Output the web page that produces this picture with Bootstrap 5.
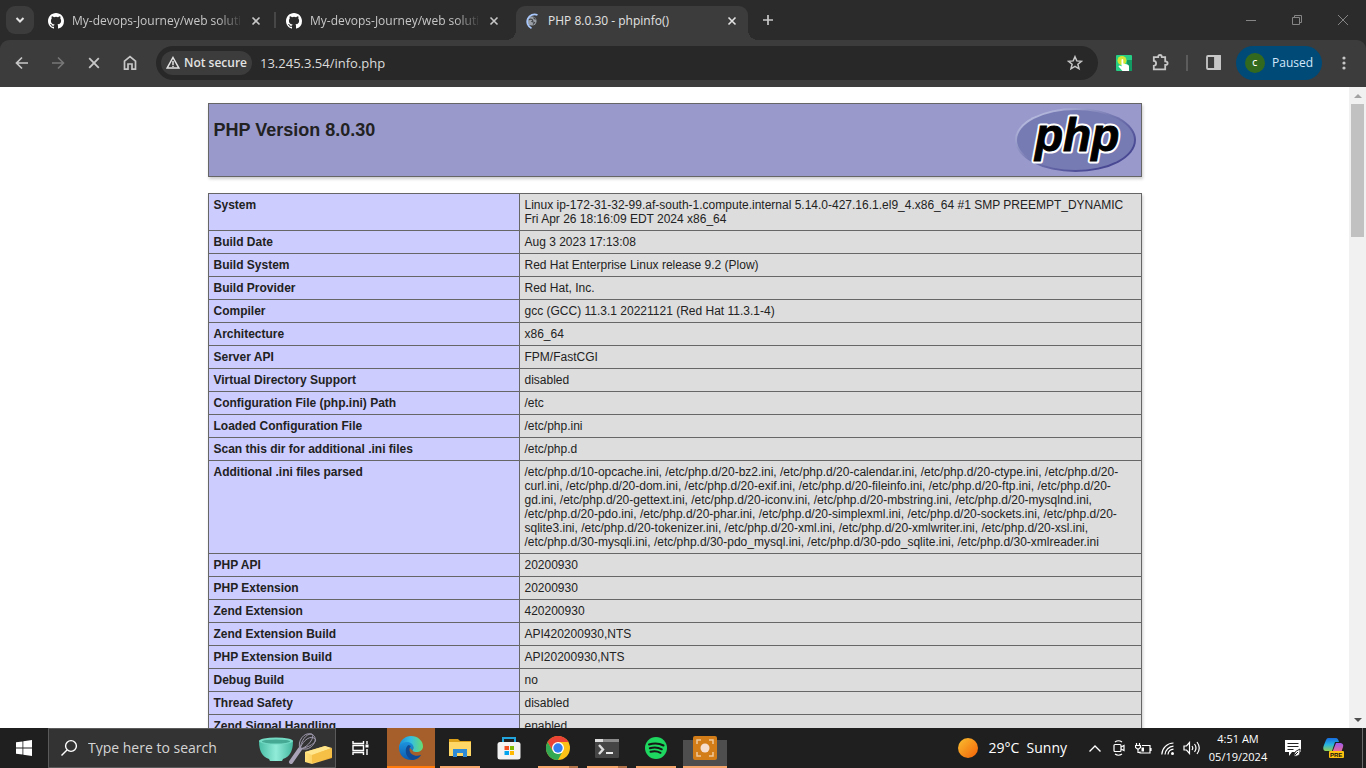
<!DOCTYPE html>
<html lang="en">
<head>
<meta charset="utf-8">
<meta name="viewport" content="width=device-width, initial-scale=1">
<title>PHP 8.0.30 - phpinfo()</title>
<link href="https://cdn.jsdelivr.net/npm/bootstrap@5.3.0/dist/css/bootstrap.min.css" rel="stylesheet">
<style>
  body { font-family: "Open Sans", "Noto Sans", sans-serif; font-size: 12px; line-height: 16px; background: #fff; }
  button { font: inherit; color: inherit; border: 0; background: transparent; padding: 0; }
  svg { display: block; flex: none; }
  .ln { fill: none; stroke: currentColor; }

  /* tab strip */
  .tabstrip { background: #2b2b2b; color: #c7c7c7; height: 40px; }
  .tab-search { width: 28px; height: 28px; border-radius: 9px; background: #3c3c3c; color: #e3e3e3; margin: 0 6px; }
  .browser-tab { width: 238px; height: 34px; padding: 0 8px 4px; margin-top: 6px; position: relative; }
  .browser-tab.split::after { content: ""; position: absolute; right: 2px; top: 6px; width: 2px; height: 16px; background: #474747; }
  .browser-tab.current { width: 232px; background: #3c3c3c; color: #e3e3e3; border-radius: 9px 9px 0 0; }
  .browser-tab.current::before, .browser-tab.current::after { content: ""; position: absolute; bottom: 0; width: 10px; height: 10px; }
  .browser-tab.current::before { left: -10px; background: radial-gradient(circle at 0 0, transparent 10px, #3c3c3c 10px); }
  .browser-tab.current::after { right: -10px; background: radial-gradient(circle at 100% 0, transparent 10px, #3c3c3c 10px); }
  .tab-title { width: 168px; height: 18px; overflow: hidden; white-space: nowrap; line-height: 18px; text-align: left; }
  .fade-end { -webkit-mask-image: linear-gradient(90deg, #000 145px, transparent 172px); mask-image: linear-gradient(90deg, #000 145px, transparent 172px); }
  .new-tab { width: 40px; height: 34px; }
  .win-btn { width: 46px; height: 40px; color: #858585; }

  /* toolbar */
  .toolbar { background: #3c3c3c; color: #c7c7c7; height: 47px; padding: 0 4px 2px; border-radius: 9px 9px 0 0; }
  .toolbar-wrap { background: #2b2b2b; }
  .tool { width: 36px; height: 34px; }
  .dimmed { color: #777; }
  .omnibox { background: #282828; border-radius: 17px; height: 34px; margin: 0 8px; padding: 0 5px; }
  .chip { background: #3c3c3c; color: #e3e3e3; border-radius: 12px; height: 24px; width: 91px; font-weight: 600; }
  .address { border: 0; outline: 0; background: transparent; color: #dcdcdc; font-size: 13px; min-width: 0; padding: 0 8px; height: 26px; }
  .profile { background: #004a77; color: #d3e8fb; border-radius: 17px; width: 86px; height: 34px; margin: 0 4px 0 5px; }
  .avatar { width: 20px; height: 20px; border-radius: 50%; background: #33691e; color: #fff; font-size: 8px; font-weight: 600; line-height: 20px; }
  .divider { width: 17px; height: 16px; }
  .divider span { width: 2px; height: 16px; background: #5c5c5c; }

  /* document */
  .doc { font-family: "Liberation Sans", Arial, sans-serif; color: #222; padding: 16px 0; }
  .info { width: 934px; border-collapse: collapse; box-shadow: 1px 2px 3px #ccc; margin: 0 auto 16px; font-size: 12px; line-height: 14px; }
  .info th, .info td { border: 1px solid #666; padding: 4px 5px; vertical-align: top; text-align: left; }
  .info th { background: #ccf; width: 311px; font-weight: bold; }
  .info td { background: #ddd; overflow-wrap: break-word; }
  .masthead { width: 934px; height: 74px; background: #99c; border: 1px solid #666; box-shadow: 1px 2px 3px #ccc; margin: 0 auto 16px; padding: 4px 5px; }
  .masthead h1 { font-size: 18px; line-height: 20px; font-weight: bold; margin: 12px 0 0; }
  .sbar { width: 17px; background: #f1f1f1; }
  .sbar-thumb { width: 13px; height: 133px; background: #c1c1c1; }
  .sbar-btn { height: 17px; width: 17px; }

  /* taskbar */
  .taskbar { background: #1f1f1f; color: #fff; height: 40px; }
  .task { width: 48px; height: 40px; position: relative; }
  .task-search { width: 288px; height: 40px; background: #333; border: 1px solid #5a5a5a; padding: 0 3px 0 11px; }
  .task-search input { background: transparent; border: 0; outline: 0; min-width: 0; font-size: 14px; padding: 0 0 0 10px; color: #ddd; }
  .task-search input::placeholder { color: #d5d5d5; opacity: 1; }
  .apps { column-gap: 1px; padding-left: 3px; }
  .running::after { content: ""; position: absolute; left: 4px; right: 4px; bottom: 0; height: 2px; background: #f6a56b; }
  .stacked::after { background: linear-gradient(90deg, #f6a56b 31px, #b5754a 31px); }
  .active-app { background: #a65e2a; }
  .active-app::after { left: 0; right: 0; background: #ff7a0a; }
  .pressed::before { content: ""; position: absolute; left: 2px; right: 2px; bottom: 0; height: 28px; background: #4e4e4e; }
  .pressed::after { left: 2px; right: 2px; }
  .pressed svg { position: relative; }
  .tray { width: 24px; height: 40px; }
  .weather { font-size: 14px; gap: 10px; }
  .clock { width: 70px; font-size: 11px; line-height: 18px; }
  .alerts { width: 40px; height: 40px; }
  .show-desktop { width: 4px; height: 40px; border-left: 1px solid #6b6b6b; margin-left: 9px; }
</style>
</head>
<body>
<div class="vh-100 d-flex flex-column overflow-hidden">

  <header class="flex-shrink-0">
    <div class="tabstrip d-flex align-items-center">
      <button class="tab-search d-flex align-items-center justify-content-center flex-shrink-0" aria-label="Search tabs">
        <svg width="10" height="8" viewBox="0 0 10 8" class="ln" stroke-width="2"><path d="M1.500 2 5 5.500 8.500 2"/></svg>
      </button>
      <div class="browser-tab split d-flex align-items-center gap-2 flex-shrink-0">
        <svg width="16" height="16" viewBox="0 0 16 16" fill="#fff"><path id="octo" d="M8 0C3.58 0 0 3.58 0 8c0 3.54 2.290 6.530 5.470 7.590.4.07.55-.17.55-.38 0-.19-.01-.82-.01-1.490-2.010.37-2.530-.49-2.690-.94-.09-.23-.48-.94-.82-1.130-.28-.15-.68-.52-.01-.53.63-.01 1.080.58 1.230.82.72 1.210 1.870.87 2.330.66.07-.52.28-.87.51-1.070-1.780-.2-3.640-.89-3.640-3.950 0-.87.31-1.590.82-2.150-.08-.2-.36-1.020.08-2.120 0 0 .67-.21 2.200.82a7.600 7.600 0 0 1 4 0c1.530-1.040 2.200-.82 2.200-.82.44 1.100.16 1.920.08 2.120.51.56.82 1.270.82 2.150 0 3.070-1.870 3.750-3.650 3.950.29.25.54.73.54 1.480 0 1.070-.01 1.930-.01 2.200 0 .21.15.46.55.38A8 8 0 0 0 16 8c0-4.420-3.580-8-8-8z"/></svg>
        <span class="tab-title fade-end">My-devops-Journey/web soluti</span>
        <button aria-label="Close tab"><svg width="16" height="16" viewBox="0 0 16 16" class="ln" stroke-width="1.600"><path d="m4.500 4.500 7 7M11.500 4.500l-7 7"/></svg></button>
      </div>
      <div class="browser-tab d-flex align-items-center gap-2 flex-shrink-0">
        <svg width="16" height="16" viewBox="0 0 16 16" fill="#fff"><use href="#octo"/></svg>
        <span class="tab-title fade-end">My-devops-Journey/web soluti</span>
        <button aria-label="Close tab"><svg width="16" height="16" viewBox="0 0 16 16" class="ln" stroke-width="1.600"><path d="m4.500 4.500 7 7M11.500 4.500l-7 7"/></svg></button>
      </div>
      <div class="browser-tab current d-flex align-items-center gap-2 flex-shrink-0">
        <svg width="16" height="16" viewBox="0 0 16 16"><circle cx="8" cy="8" r="4.600" fill="#9aa0a6"/><path d="M4.500 7q2-1.500 3.500-.5t0 2l2.500 1-1.500 2M9.500 4.500l2 2" fill="none" stroke="#45484b" stroke-width="1.200"/><path d="M13.500 2A7.200 7.200 0 1 0 7.500 15.200" fill="none" stroke="#a8c7fa" stroke-width="1.800"/></svg>
        <span class="tab-title">PHP 8.0.30 - phpinfo()</span>
        <button aria-label="Close tab"><svg width="16" height="16" viewBox="0 0 16 16" class="ln" stroke-width="1.600"><path d="m4.500 4.500 7 7M11.500 4.500l-7 7"/></svg></button>
      </div>
      <button class="new-tab d-flex align-items-center justify-content-center flex-shrink-0" aria-label="New tab"><svg width="12" height="12" viewBox="0 0 12 12" class="ln" stroke-width="1.700"><path d="M6 1v10M1 6h10"/></svg></button>
      <div class="ms-auto d-flex">
        <button class="win-btn d-flex align-items-center justify-content-center" aria-label="Minimize"><svg width="10" height="10" viewBox="0 0 10 10" class="ln"><path d="M0 5.500h10"/></svg></button>
        <button class="win-btn d-flex align-items-center justify-content-center" aria-label="Restore"><svg width="10" height="10" viewBox="0 0 10 10" class="ln"><path d="M.5 2.500h7v7h-7zM2.500 2.500v-2h7v7h-2"/></svg></button>
        <button class="win-btn d-flex align-items-center justify-content-center" aria-label="Close"><svg width="10" height="10" viewBox="0 0 10 10" class="ln"><path d="m0 0 10 10M10 0 0 10"/></svg></button>
      </div>
    </div>

    <div class="toolbar-wrap">
      <div class="toolbar d-flex align-items-center">
        <button class="tool d-flex align-items-center justify-content-center" aria-label="Back"><svg width="14" height="14" viewBox="0 0 14 14" class="ln" stroke-width="1.700"><path d="M13 7H2M7 1.500 1.500 7 7 12.500"/></svg></button>
        <button class="tool dimmed d-flex align-items-center justify-content-center" aria-label="Forward"><svg width="14" height="14" viewBox="0 0 14 14" class="ln" stroke-width="1.600"><path d="M1 7h11M7 1.500 12.500 7 7 12.500"/></svg></button>
        <button class="tool d-flex align-items-center justify-content-center" aria-label="Stop"><svg width="12" height="12" viewBox="0 0 12 12" class="ln" stroke-width="1.800"><path d="m1.200 1.200 9.600 9.600M10.800 1.200l-9.600 9.600"/></svg></button>
        <button class="tool d-flex align-items-center justify-content-center" aria-label="Home"><svg width="14" height="16" viewBox="0 0 14 16" class="ln" stroke-width="1.700"><path d="M1.500 6.200 7 1.700l5.500 4.500v8H9V9H5v5.200H1.500z"/></svg></button>
        <div class="omnibox flex-grow-1 d-flex align-items-center">
          <button class="chip d-flex align-items-center justify-content-center gap-1 text-nowrap flex-shrink-0">
            <svg width="14" height="13" viewBox="0 0 14 13" class="ln" stroke-width="1.500"><path d="M7 1.500 12.800 12H1.200zM7 5v4M7 9.800v1.200"/></svg>Not secure
          </button>
          <input class="address flex-grow-1" type="text" aria-label="Address" value="13.245.3.54/info.php">
          <button class="tool d-flex align-items-center justify-content-center flex-shrink-0" aria-label="Bookmark"><svg width="16" height="16" viewBox="0 0 16 16" class="ln" stroke-width="1.500"><path d="m8 1.700 1.800 4.200 4.600.4-3.500 3 1.100 4.500L8 11.400l-4 2.400 1.100-4.500-3.500-3 4.600-.4z"/></svg></button>
        </div>
        <button class="tool d-flex align-items-center justify-content-center" aria-label="Click extension"><svg width="16" height="16" viewBox="0 0 16 16"><rect width="16" height="16" rx="1" fill="#25cf85"/><path d="M11 5h5v11h-5z" fill="#129a63"/><circle cx="6" cy="5.500" r="4.500" fill="#d2e635"/><path d="M5.500 4.500q1-1 1.800 0v4l4.200.9q1.500.4 1.500 2V16H6.500l-4-4.500q.2-1.500 2-.7l1 .7z" fill="#fff"/></svg></button>
        <button class="tool d-flex align-items-center justify-content-center" aria-label="Extensions"><svg width="17" height="17" viewBox="0 0 17 17" class="ln" stroke-width="1.800"><path d="M1.800 3.200h4.400q0-2.200 1.800-2.200t1.800 2.200h3.400v4.200q2.400 0 2.400 1.800t-2.400 1.800v4.400H1.800v-3.600q2.300-.2 2.300-2.500t-2.300-2.500z"/></svg></button>
        <span class="divider d-flex justify-content-center"><span></span></span>
        <button class="tool d-flex align-items-center justify-content-center" aria-label="Side panel"><svg width="15" height="15" viewBox="0 0 15 15" class="ln" stroke-width="1.800"><rect x="1" y="1" width="13" height="13" rx="1"/><path d="M9 1h5v13H9z" fill="currentColor"/></svg></button>
        <button class="profile d-flex align-items-center justify-content-center gap-1"><span class="avatar">C</span>&nbsp;Paused</button>
        <button class="tool d-flex align-items-center justify-content-center" aria-label="Menu"><svg width="4" height="14" viewBox="0 0 4 14" fill="currentColor"><circle cx="2" cy="2" r="1.600"/><circle cx="2" cy="7" r="1.600"/><circle cx="2" cy="12" r="1.600"/></svg></button>
      </div>
    </div>
  </header>

  <div class="flex-grow-1 d-flex overflow-hidden">
    <main class="doc flex-grow-1 overflow-hidden">
      <div class="masthead d-flex justify-content-between">
        <h1>PHP Version 8.0.30</h1>
        <svg width="121" height="65" viewBox="0 0 121 65" role="img" aria-label="PHP logo">
          <defs><linearGradient id="rim" x1="0" y1="0" x2="1" y2="1"><stop offset=".15" stop-color="#b4b8dc"/><stop offset=".45" stop-color="#777bb3"/><stop offset=".8" stop-color="#484893"/></linearGradient></defs>
          <ellipse cx="60.500" cy="32" rx="60.500" ry="32" fill="url(#rim)"/>
          <ellipse cx="60.500" cy="32" rx="58.500" ry="30" fill="#777bb3"/>
          <text x="20" y="43" font-family="Liberation Sans" font-weight="bold" font-style="italic" font-size="46" stroke="#fff" stroke-width="5" stroke-linejoin="round" fill="#fff">php</text>
          <text x="20" y="43" font-family="Liberation Sans" font-weight="bold" font-style="italic" font-size="46" stroke="#000" stroke-width="1" fill="#000" aria-hidden="true">php</text>
        </svg>
      </div>
      <table class="info">
        <tbody>
        <tr><th scope="row">System</th><td>Linux ip-172-31-32-99.af-south-1.compute.internal 5.14.0-427.16.1.el9_4.x86_64 #1 SMP PREEMPT_DYNAMIC Fri Apr 26 18:16:09 EDT 2024 x86_64</td></tr>
        <tr><th scope="row">Build Date</th><td>Aug 3 2023 17:13:08</td></tr>
        <tr><th scope="row">Build System</th><td>Red Hat Enterprise Linux release 9.2 (Plow)</td></tr>
        <tr><th scope="row">Build Provider</th><td>Red Hat, Inc.</td></tr>
        <tr><th scope="row">Compiler</th><td>gcc (GCC) 11.3.1 20221121 (Red Hat 11.3.1-4)</td></tr>
        <tr><th scope="row">Architecture</th><td>x86_64</td></tr>
        <tr><th scope="row">Server API</th><td>FPM/FastCGI</td></tr>
        <tr><th scope="row">Virtual Directory Support</th><td>disabled</td></tr>
        <tr><th scope="row">Configuration File (php.ini) Path</th><td>/etc</td></tr>
        <tr><th scope="row">Loaded Configuration File</th><td>/etc/php.ini</td></tr>
        <tr><th scope="row">Scan this dir for additional .ini files</th><td>/etc/php.d</td></tr>
        <tr><th scope="row">Additional .ini files parsed</th><td>/etc/php.d/10-opcache.ini, /etc/php.d/20-bz2.ini, /etc/php.d/20-calendar.ini, /etc/php.d/20-ctype.ini, /etc/php.d/20-curl.ini, /etc/php.d/20-dom.ini, /etc/php.d/20-exif.ini, /etc/php.d/20-fileinfo.ini, /etc/php.d/20-ftp.ini, /etc/php.d/20-gd.ini, /etc/php.d/20-gettext.ini, /etc/php.d/20-iconv.ini, /etc/php.d/20-mbstring.ini, /etc/php.d/20-mysqlnd.ini, /etc/php.d/20-pdo.ini, /etc/php.d/20-phar.ini, /etc/php.d/20-simplexml.ini, /etc/php.d/20-sockets.ini, /etc/php.d/20-sqlite3.ini, /etc/php.d/20-tokenizer.ini, /etc/php.d/20-xml.ini, /etc/php.d/20-xmlwriter.ini, /etc/php.d/20-xsl.ini, /etc/php.d/30-mysqli.ini, /etc/php.d/30-pdo_mysql.ini, /etc/php.d/30-pdo_sqlite.ini, /etc/php.d/30-xmlreader.ini</td></tr>
        <tr><th scope="row">PHP API</th><td>20200930</td></tr>
        <tr><th scope="row">PHP Extension</th><td>20200930</td></tr>
        <tr><th scope="row">Zend Extension</th><td>420200930</td></tr>
        <tr><th scope="row">Zend Extension Build</th><td>API420200930,NTS</td></tr>
        <tr><th scope="row">PHP Extension Build</th><td>API20200930,NTS</td></tr>
        <tr><th scope="row">Debug Build</th><td>no</td></tr>
        <tr><th scope="row">Thread Safety</th><td>disabled</td></tr>
        <tr><th scope="row">Zend Signal Handling</th><td>enabled</td></tr>
        </tbody>
      </table>
    </main>
    <div class="sbar d-flex flex-column align-items-center flex-shrink-0">
      <span class="sbar-btn d-flex align-items-center justify-content-center"><svg width="8" height="4" viewBox="0 0 8 4"><path d="M0 4 4 0l4 4z" fill="#a3a3a3"/></svg></span>
      <span class="sbar-thumb"></span>
      <span class="sbar-btn d-flex align-items-center justify-content-center mt-auto"><svg width="8" height="4" viewBox="0 0 8 4"><path d="m0 0 4 4 4-4z" fill="#505050"/></svg></span>
    </div>
  </div>

  <footer class="taskbar d-flex align-items-center flex-shrink-0">
    <button class="task d-flex align-items-center justify-content-center" aria-label="Start"><svg width="16" height="16" viewBox="0 0 16 16" fill="#fff"><path d="m0 2.300 6.500-.9v6.200H0zM7.300 1.300 16 0v7.600H7.300zM0 8.400h6.500v6.200L0 13.700zM7.300 8.400H16V16l-8.700-1.300z"/></svg></button>
    <div class="task-search d-flex align-items-center flex-shrink-0">
      <svg width="18" height="18" viewBox="0 0 18 18" class="ln" stroke-width="1.400"><circle cx="11" cy="7" r="5.400"/><path d="m7 11-5.500 5.500"/></svg>
      <input class="flex-grow-1" type="text" placeholder="Type here to search" aria-label="Type here to search">
      <svg width="74" height="36" viewBox="0 0 74 36">
        <defs><linearGradient id="bowl"><stop stop-color="#49bda5"/><stop offset=".5" stop-color="#91ecd8"/><stop offset="1" stop-color="#45b79f"/></linearGradient><linearGradient id="butter"><stop stop-color="#ffe07a"/><stop offset="1" stop-color="#f0a92b"/></linearGradient></defs>
        <path d="M1 11q0 15 10 18l1 2h12l1-2q10-3 10-18z" fill="url(#bowl)"/><ellipse cx="18" cy="11" rx="17" ry="3.500" fill="#74dbc5"/><ellipse cx="18" cy="11.500" rx="14" ry="2" fill="#45a994"/>
        <path d="m33 32 9-13" stroke="#aaa3b8" stroke-width="4" stroke-linecap="round"/>
        <g fill="none" stroke="#a09aae"><path d="M42 19c-3-8 4-17 11-15s5 12-4 15zM42 19c1-8 6-15 11-15s-1 13-11 15M42 19c1-5 8-14 14-11s-6 10-14 11"/></g>
        <path d="m47 22 20-6 7 3v9l-20 6-7-2z" fill="url(#butter)"/><path d="m47 22 20-6 7 2-20 7z" fill="#ffe58b"/><path d="m54 25 20-7v9l-20 6z" fill="#f6c046"/>
      </svg>
    </div>
    <button class="task d-flex align-items-center justify-content-center" aria-label="Task view"><svg width="17" height="16" viewBox="0 0 17 16" class="ln" stroke-width="1.400"><path d="M1 1v2.500h10.500V1M1 15v-2.500h10.500V15M1 5.500h10.500v5H1zM15 1v3M15 9v6"/><path d="M13.500 4.500h3v3h-3z" fill="#fff" stroke="none"/></svg></button>
    <div class="apps d-flex me-auto">
      <button class="task running active-app d-flex align-items-center justify-content-center" aria-label="Edge"><svg width="24" height="24" viewBox="0 0 24 24">
        <defs><linearGradient id="e1"><stop stop-color="#1b8fd8"/><stop offset=".5" stop-color="#35bfe0"/><stop offset="1" stop-color="#68dd70"/></linearGradient><linearGradient id="e2" x2="0" y2="1"><stop stop-color="#1d93dc"/><stop offset="1" stop-color="#0c5bb0"/></linearGradient></defs>
        <path d="M0 11C1 4 6 0 12 0c7 0 12 5 12 10 0 4-3 6-6.500 6-3.500 0-4.500-1-3.500-2.500S15 8 9 8c-5 0-8 2-9 6z" fill="url(#e1)"/>
        <path d="M0 12c0-4 4-6 8-6 4 0 6.500 2.500 6.500 5.500 0 1.500-1 2-1 3l-3-3c-2 4 1 9 6 9 2 0 4-.5 5.500-1.500C20 22 16.500 24 12 24 5 24 0 18.500 0 12z" fill="url(#e2)"/>
        <path d="M9.500 9C6 11 6 17 8.500 20.500c2 2.800 4 3.500 5.500 3.400 3.500-.4 6.500-2.400 8.200-5.100-5 2.500-11.700 0-11.700-5.300 0-1.500.5-2.500 1.500-3.500z" fill="#114a92"/></svg></button>
      <button class="task running d-flex align-items-center justify-content-center" aria-label="File Explorer"><svg width="22" height="20" viewBox="0 0 22 20"><path d="M0 2V1h9l2 2h11v15H0z" fill="#dca018"/><path d="M0 4h22v14H0z" fill="#ffd767"/><path d="M4 18v-7h14v8h-4v-4H8v4H4z" fill="#2f8bd6"/></svg></button>
      <button class="task d-flex align-items-center justify-content-center" aria-label="Microsoft Store"><svg width="24" height="24" viewBox="0 0 24 24"><path d="M6 7V2h12v5" fill="none" stroke="#21a5dc" stroke-width="2"/><rect x=".5" y="6" width="23" height="17.500" rx="2.500" fill="#f2f2f2"/><path d="M7.500 10H12v4H7.500z" fill="#f25022"/><path d="M13 10h4v4h-4z" fill="#7fba00"/><path d="M7.500 15H12v4H7.500z" fill="#00a4ef"/><path d="M13 15h4v4h-4z" fill="#ffb900"/></svg></button>
      <button class="task running stacked d-flex align-items-center justify-content-center" aria-label="Chrome"><svg width="24" height="24" viewBox="0 0 24 24"><circle cx="12" cy="12" r="12" fill="#fbc116"/><path d="M1.600 6A12 12 0 0 1 22.400 6H12L6.800 15z" fill="#ea4335"/><path d="M1.600 6 6.800 15 12 18l4-1.500L12 24A12 12 0 0 1 1.600 6z" fill="#34a853"/><circle cx="12" cy="12" r="6" fill="#fff"/><circle cx="12" cy="12" r="4.700" fill="#327ef0"/></svg></button>
      <button class="task running stacked d-flex align-items-center justify-content-center" aria-label="Terminal"><svg width="24" height="19" viewBox="0 0 24 19"><rect width="24" height="19" rx="1" fill="#454545"/><path d="M0 0h24v3H0z" fill="#8b8b8b"/><path d="M0 0h8v3H0z" fill="#ddd"/><path d="m4 6 4 4.500L4 15" fill="none" stroke="#ddd" stroke-width="2.400"/><path d="M11 14h7" stroke="#fff" stroke-width="1.800"/></svg></button>
      <button class="task running d-flex align-items-center justify-content-center" aria-label="Spotify"><svg width="22" height="22" viewBox="0 0 22 22"><circle cx="11" cy="11" r="11" fill="#1ed760"/><path d="M4 7.500q8-2.500 14.500 1M4.800 11.300q6.500-2 12 1M5.500 14.800q5.500-1.500 10 1" fill="none" stroke="#171717" stroke-width="2" stroke-linecap="round"/></svg></button>
      <button class="task running pressed d-flex align-items-center justify-content-center" aria-label="Screen recorder"><svg width="24" height="24" viewBox="0 0 24 24"><rect width="24" height="24" rx="2" fill="#d27d18"/><circle cx="12" cy="12" r="4.500" fill="#f5ded0"/><path d="M4 8V4h4M16 4h4v4M20 16v4h-4M8 20H4v-4" fill="none" stroke="#f0c99a" stroke-width="1.500"/></svg></button>
    </div>
    <div class="weather d-flex align-items-center text-nowrap me-3">
      <svg width="20" height="20" viewBox="0 0 20 20"><defs><linearGradient id="sun" x2="1" y2="1"><stop offset=".1" stop-color="#f8b62c"/><stop offset=".9" stop-color="#f46a0b"/></linearGradient></defs><circle cx="10" cy="10" r="10" fill="url(#sun)"/></svg>
      <span>29°C&nbsp; Sunny</span>
    </div>
    <button class="tray d-flex align-items-center justify-content-center" aria-label="Show hidden icons"><svg width="12" height="7" viewBox="0 0 12 7" class="ln" stroke-width="1.400"><path d="m.5 6.500 5.500-5.500 5.500 5.500"/></svg></button>
    <button class="tray d-flex align-items-center justify-content-center" aria-label="Meet now"><svg width="12" height="16" viewBox="0 0 12 16" class="ln" stroke-width="1.200"><rect x="1" y="4.500" width="7" height="7" rx="1"/><path d="m8 7 3-1.500v5L8 9M2 2q3.500-2.500 7 0M2 14q3.500 2.500 7 0"/></svg></button>
    <button class="tray d-flex align-items-center justify-content-center" aria-label="Battery"><svg width="17" height="13" viewBox="0 0 17 13" class="ln" stroke-width="1.200"><path d="M7 3.500h8v7.500H5V9.500M16 6v3M1.500 1v3M4.500 1v3M.5 3.500h5v2L3 7.500.5 5.500zM3 7v3.500h2"/><path d="M6.500 5.500H9v4H6.500z" fill="#fff" stroke="none"/></svg></button>
    <button class="tray d-flex align-items-center justify-content-center" aria-label="Wi-Fi"><svg width="13" height="13" viewBox="0 0 13 13" class="ln" stroke-width="1.200"><path d="M.8 12.500A12 12 0 0 1 12.500 1M4 12.500A9 9 0 0 1 12.500 4.200M7 12.500A6 6 0 0 1 12.500 7.200"/><circle cx="11.500" cy="11.500" r="1.500" fill="#fff" stroke="none"/></svg></button>
    <button class="tray d-flex align-items-center justify-content-center" aria-label="Volume"><svg width="17" height="14" viewBox="0 0 17 14" class="ln" stroke-width="1.200"><path d="M1 5h2.500l3-3.500v11L3.500 9H1zM9 5q1.500 2 0 4M11.500 3q3 4 0 8M14 1q4.500 6 0 12"/></svg></button>
    <div class="clock text-center">4:51 AM<br>05/19/2024</div>
    <button class="alerts d-flex align-items-center justify-content-center" aria-label="Notifications"><svg width="17" height="17" viewBox="0 0 17 17"><path d="M0 0h16v12H7l-3 4v-4H0z" fill="#fff"/><path d="M2.500 3.500h11M2.500 6.500h11M2.500 9.500h6" stroke="#222" stroke-width="1.200"/><path d="M9 15q0-4 6-6v4q-1 4-6 3z" fill="#fff" stroke="#222"/><path d="m10 15 3-3" stroke="#222"/></svg></button>
    <button class="alerts d-flex align-items-center justify-content-center" aria-label="Copilot"><svg width="21" height="20" viewBox="0 0 21 20"><defs><linearGradient id="c1" x2="0" y2="1"><stop stop-color="#176ce0"/><stop offset=".5" stop-color="#27b4df"/><stop offset="1" stop-color="#92cf54"/></linearGradient><linearGradient id="c2" x2="0" y2="1"><stop stop-color="#9c5aed"/><stop offset="1" stop-color="#fb6e81"/></linearGradient></defs><path d="M5 0h8q2 0 3 4h-4L9 13H2q-3-1-1-6l2-5q1-2 2-2z" fill="url(#c1)"/><path d="M13 5h5q3 1 2 4l-2 6H9z" fill="url(#c2)"/><rect x="6" y="13" width="15" height="7" rx="1" fill="#ffc20e"/><text x="7" y="19" font-family="Liberation Sans" font-size="6" font-weight="bold" fill="#111">PRE</text></svg></button>
    <span class="show-desktop"></span>
  </footer>
</div>
<script src="https://cdn.jsdelivr.net/npm/bootstrap@5.3.0/dist/js/bootstrap.bundle.min.js"></script>
</body>
</html>
